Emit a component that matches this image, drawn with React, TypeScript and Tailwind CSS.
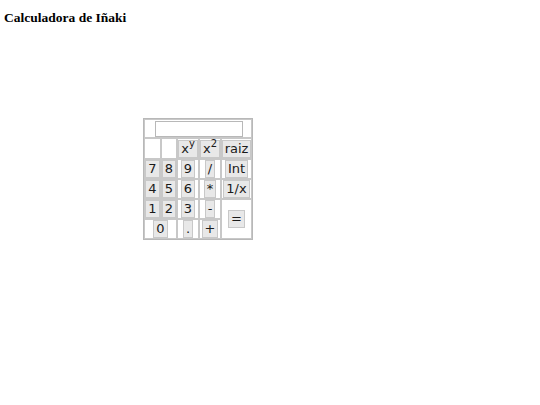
const btn =
  'border border-[#c8c8c8] bg-[#e8e8e8] px-[2px] text-[13px] leading-[16px] text-[#1a1a1a] font-["DejaVu_Sans",Verdana,sans-serif]';

const cell = 'border border-[#c8c8c8] flex items-center justify-center';

function Key({ label }: { label: React.ReactNode }) {
  return <button className={btn}>{label}</button>;
}

export default function App() {
  return (
    <div className="min-h-[405px] w-[540px] bg-white">
      <h1 className='pl-[4px] pt-[10px] text-[13.5px] leading-[15px] font-bold text-black font-["Liberation_Serif","Times_New_Roman",serif]'>
        Calculadora de Iñaki
      </h1>

      <div className="ml-[143px] mt-[93px] inline-grid grid-cols-[17px_16px_22px_22px_31px] grid-rows-[19px_21px_20px_20px_20px_20px] border border-[#b8b8b8]">
        {/* display */}
        <div className="col-span-5 border border-[#c8c8c8] flex items-center pl-[10px]">
          <input
            type="text"
            className="h-[16px] w-[88px] border border-[#b8b8b8] bg-white outline-none"
          />
        </div>

        <div className={cell} />
        <div className={cell} />
        <div className={cell}>
          <Key label={<span>x<sup className="text-[10px] -top-[6px]">y</sup></span>} />
        </div>
        <div className={cell}>
          <Key label={<span>x<sup className="text-[10px] -top-[6px]">2</sup></span>} />
        </div>
        <div className={cell}><Key label="raiz" /></div>

        <div className={cell}><Key label="7" /></div>
        <div className={cell}><Key label="8" /></div>
        <div className={cell}><Key label="9" /></div>
        <div className={cell}><Key label="/" /></div>
        <div className={cell}><Key label="Int" /></div>

        <div className={cell}><Key label="4" /></div>
        <div className={cell}><Key label="5" /></div>
        <div className={cell}><Key label="6" /></div>
        <div className={cell}><Key label="*" /></div>
        <div className={cell}><Key label="1/x" /></div>

        <div className={cell}><Key label="1" /></div>
        <div className={cell}><Key label="2" /></div>
        <div className={cell}><Key label="3" /></div>
        <div className={cell}><Key label="-" /></div>
        <div className={`${cell} row-span-2`}><Key label="=" /></div>

        <div className={`${cell} col-span-2`}><Key label="0" /></div>
        <div className={cell}><Key label="." /></div>
        <div className={cell}><Key label="+" /></div>
      </div>
    </div>
  );
}
